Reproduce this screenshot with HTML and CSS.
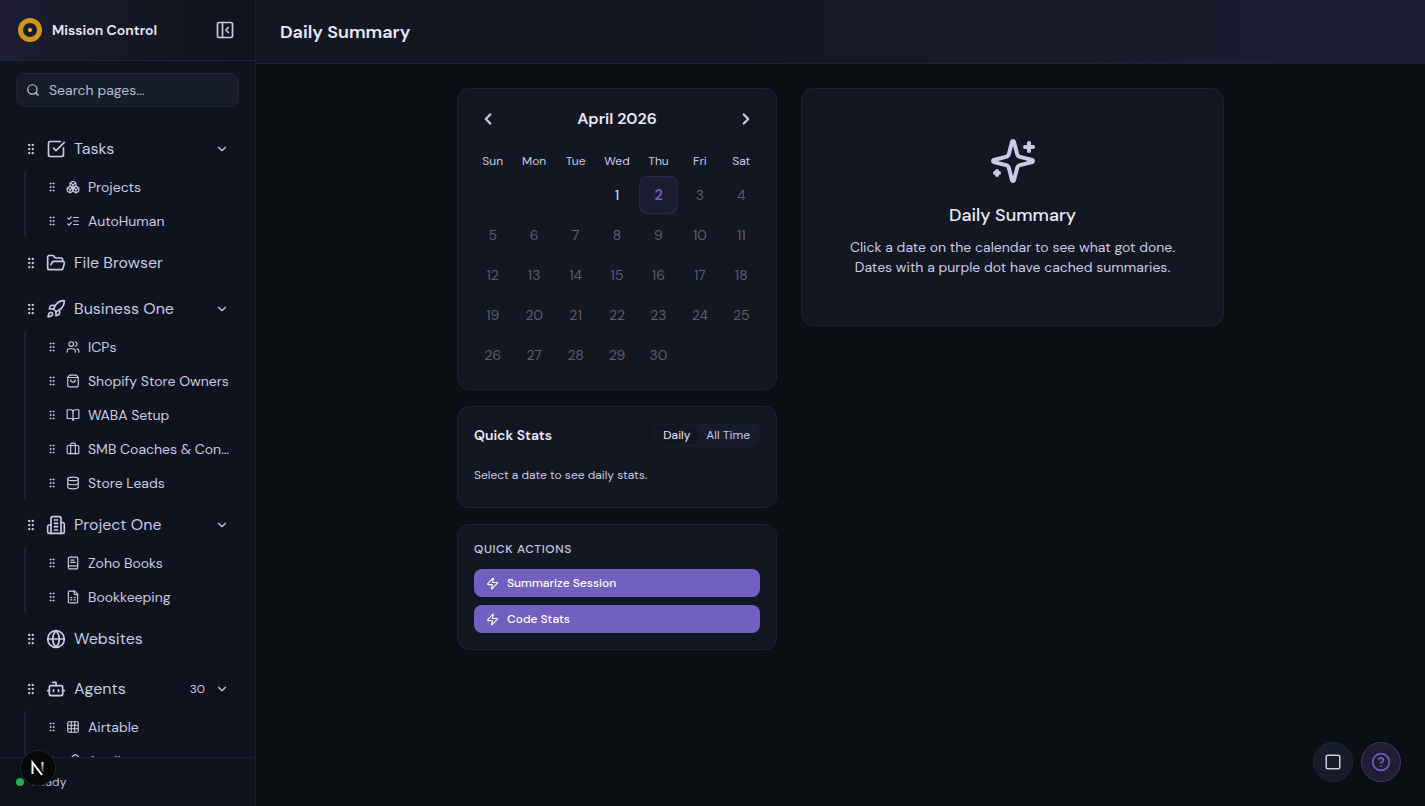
FILE: index.html
```
<!DOCTYPE html>
<html lang="en">
<head>
    <meta charset="UTF-8">
    <meta name="viewport" content="width=device-width, initial-scale=1.0">
    <title>Mission Control</title>
    <link rel="stylesheet" href="styles.css">
</head>
<body>
    <!-- icon sprite -->
    <svg class="sprite" xmlns="http://www.w3.org/2000/svg">
        <symbol id="i-grip" viewBox="0 0 24 24"><circle cx="9" cy="5" r="1"/><circle cx="9" cy="12" r="1"/><circle cx="9" cy="19" r="1"/><circle cx="15" cy="5" r="1"/><circle cx="15" cy="12" r="1"/><circle cx="15" cy="19" r="1"/></symbol>
        <symbol id="i-panel" viewBox="0 0 24 24"><rect width="18" height="18" x="3" y="3" rx="2"/><path d="M9 3v18"/><path d="m16 15-3-3 3-3"/></symbol>
        <symbol id="i-search" viewBox="0 0 24 24"><circle cx="11" cy="11" r="8"/><path d="m21 21-4.3-4.3"/></symbol>
        <symbol id="i-down" viewBox="0 0 24 24"><path d="m6 9 6 6 6-6"/></symbol>
        <symbol id="i-left" viewBox="0 0 24 24"><path d="m15 18-6-6 6-6"/></symbol>
        <symbol id="i-right" viewBox="0 0 24 24"><path d="m9 18 6-6-6-6"/></symbol>
        <symbol id="i-check" viewBox="0 0 24 24"><path d="M21 10.5V19a2 2 0 0 1-2 2H5a2 2 0 0 1-2-2V5a2 2 0 0 1 2-2h12.5"/><path d="m9 11 3 3L22 4"/></symbol>
        <symbol id="i-boxes" viewBox="0 0 24 24"><path d="M2.97 12.92A2 2 0 0 0 2 14.63v3.24a2 2 0 0 0 .97 1.71l3 1.8a2 2 0 0 0 2.06 0L12 19v-5.5l-5-3-4.03 2.42Z"/><path d="m7 16.5-4.74-2.85"/><path d="m7 16.5 5-3"/><path d="M7 16.5v5.17"/><path d="M12 13.5V19l3.97 2.38a2 2 0 0 0 2.06 0l3-1.8a2 2 0 0 0 .97-1.71v-3.24a2 2 0 0 0-.97-1.71L17 10.5l-5 3Z"/><path d="m17 16.5-5-3"/><path d="m17 16.5 4.74-2.85"/><path d="M17 16.5v5.17"/><path d="M7.97 4.42A2 2 0 0 0 7 6.13v4.37l5 3 5-3V6.13a2 2 0 0 0-.97-1.71l-3-1.8a2 2 0 0 0-2.06 0l-3 1.8Z"/><path d="M12 8 7.26 5.15"/><path d="m12 8 4.74-2.85"/><path d="M12 13.5V8"/></symbol>
        <symbol id="i-checklist" viewBox="0 0 24 24"><path d="m3 17 2 2 4-4"/><path d="m3 7 2 2 4-4"/><path d="M13 6h8"/><path d="M13 12h8"/><path d="M13 18h8"/></symbol>
        <symbol id="i-folder" viewBox="0 0 24 24"><path d="m6 14 1.5-2.9A2 2 0 0 1 9.24 10H20a2 2 0 0 1 1.94 2.5l-1.54 6a2 2 0 0 1-1.95 1.5H4a2 2 0 0 1-2-2V5a2 2 0 0 1 2-2h3.9a2 2 0 0 1 1.69.9l.81 1.2a2 2 0 0 0 1.67.9H18a2 2 0 0 1 2 2v2"/></symbol>
        <symbol id="i-rocket" viewBox="0 0 24 24"><path d="M4.5 16.5c-1.5 1.26-2 5-2 5s3.74-.5 5-2c.71-.84.7-2.13-.09-2.91a2.18 2.18 0 0 0-2.91-.09z"/><path d="m12 15-3-3a22 22 0 0 1 2-3.95A12.88 12.88 0 0 1 22 2c0 2.72-.78 7.5-6 11a22.35 22.35 0 0 1-4 2z"/><path d="M9 12H4s.55-3.03 2-4c1.62-1.08 5 0 5 0"/><path d="M12 15v5s3.03-.55 4-2c1.08-1.62 0-5 0-5"/></symbol>
        <symbol id="i-users" viewBox="0 0 24 24"><path d="M16 21v-2a4 4 0 0 0-4-4H6a4 4 0 0 0-4 4v2"/><circle cx="9" cy="7" r="4"/><path d="M22 21v-2a4 4 0 0 0-3-3.87"/><path d="M16 3.13a4 4 0 0 1 0 7.75"/></symbol>
        <symbol id="i-bag" viewBox="0 0 24 24"><path d="M3.1 6.03h17.8"/><path d="M3.4 5.47A2 2 0 0 0 3 6.67V20a2 2 0 0 0 2 2h14a2 2 0 0 0 2-2V6.67a2 2 0 0 0-.4-1.2l-2-2.67A2 2 0 0 0 17 2H7a2 2 0 0 0-1.6.8z"/><path d="M16 10a4 4 0 0 1-8 0"/></symbol>
        <symbol id="i-book" viewBox="0 0 24 24"><path d="M12 7v14"/><path d="M3 18a1 1 0 0 1-1-1V4a1 1 0 0 1 1-1h5a4 4 0 0 1 4 4 4 4 0 0 1 4-4h5a1 1 0 0 1 1 1v13a1 1 0 0 1-1 1h-6a3 3 0 0 0-3 3 3 3 0 0 0-3-3z"/></symbol>
        <symbol id="i-case" viewBox="0 0 24 24"><path d="M16 20V4a2 2 0 0 0-2-2h-4a2 2 0 0 0-2 2v16"/><rect width="20" height="14" x="2" y="6" rx="2"/></symbol>
        <symbol id="i-db" viewBox="0 0 24 24"><ellipse cx="12" cy="5" rx="9" ry="3"/><path d="M3 5v14a9 3 0 0 0 18 0V5"/><path d="M3 12a9 3 0 0 0 18 0"/></symbol>
        <symbol id="i-building" viewBox="0 0 24 24"><path d="M6 22V4a2 2 0 0 1 2-2h8a2 2 0 0 1 2 2v18Z"/><path d="M6 12H4a2 2 0 0 0-2 2v6a2 2 0 0 0 2 2h2"/><path d="M18 9h2a2 2 0 0 1 2 2v9a2 2 0 0 1-2 2h-2"/><path d="M10 6h4"/><path d="M10 10h4"/><path d="M10 14h4"/><path d="M10 18h4"/></symbol>
        <symbol id="i-booktext" viewBox="0 0 24 24"><path d="M4 19.5v-15A2.5 2.5 0 0 1 6.5 2H19a1 1 0 0 1 1 1v18a1 1 0 0 1-1 1H6.5a1 1 0 0 1 0-5H20"/><path d="M8 11h8"/><path d="M8 7h6"/></symbol>
        <symbol id="i-sheet" viewBox="0 0 24 24"><path d="M15 2H6a2 2 0 0 0-2 2v16a2 2 0 0 0 2 2h12a2 2 0 0 0 2-2V7Z"/><path d="M14 2v4a2 2 0 0 0 2 2h4"/><path d="M8 13h2"/><path d="M14 13h2"/><path d="M8 17h2"/><path d="M14 17h2"/></symbol>
        <symbol id="i-globe" viewBox="0 0 24 24"><circle cx="12" cy="12" r="10"/><path d="M12 2a14.5 14.5 0 0 0 0 20 14.5 14.5 0 0 0 0-20"/><path d="M2 12h20"/></symbol>
        <symbol id="i-bot" viewBox="0 0 24 24"><path d="M12 8V4H8"/><rect width="16" height="12" x="4" y="8" rx="2"/><path d="M2 14h2"/><path d="M20 14h2"/><path d="M15 13v2"/><path d="M9 13v2"/></symbol>
        <symbol id="i-grid" viewBox="0 0 24 24"><rect width="18" height="18" x="3" y="3" rx="2"/><path d="M3 9h18"/><path d="M3 15h18"/><path d="M9 3v18"/><path d="M15 3v18"/></symbol>
        <symbol id="i-zap" viewBox="0 0 24 24"><path d="M4 14a1 1 0 0 1-.78-1.63l9.9-10.2a.5.5 0 0 1 .86.46l-1.92 6.02A1 1 0 0 0 13 10h7a1 1 0 0 1 .78 1.63l-9.9 10.2a.5.5 0 0 1-.86-.46l1.92-6.02A1 1 0 0 0 11 14z"/></symbol>
        <symbol id="i-sparkles" viewBox="0 0 24 24"><path d="M9.937 15.5A2 2 0 0 0 8.5 14.063l-6.135-1.582a.5.5 0 0 1 0-.962L8.5 9.936A2 2 0 0 0 9.937 8.5l1.582-6.135a.5.5 0 0 1 .963 0L14.063 8.5A2 2 0 0 0 15.5 9.937l6.135 1.581a.5.5 0 0 1 0 .964L15.5 14.063a2 2 0 0 0-1.437 1.437l-1.582 6.135a.5.5 0 0 1-.963 0z"/><path d="M20 3v4"/><path d="M22 5h-4"/><path d="M4 17v2"/><path d="M5 18H3"/></symbol>
        <symbol id="i-square" viewBox="0 0 24 24"><rect width="18" height="18" x="3" y="3" rx="2"/></symbol>
        <symbol id="i-help" viewBox="0 0 24 24"><circle cx="12" cy="12" r="10"/><path d="M9.09 9a3 3 0 0 1 5.83 1c0 2-3 3-3 3"/><path d="M12 17h.01"/></symbol>
        <symbol id="i-feather" viewBox="0 0 24 24"><path d="M12.67 19a2 2 0 0 0 1.416-.588l6.154-6.172a6 6 0 0 0-8.49-8.49L5.586 9.914A2 2 0 0 0 5 11.328V18a1 1 0 0 0 1 1z"/><path d="M16 8 2 22"/><path d="M17.5 15H9"/></symbol>
    </svg>

    <div class="app">
        <aside class="sidebar">
            <div class="brand">
                <svg class="logo" viewBox="0 0 24 24"><circle cx="12" cy="12" r="9.5" fill="none" stroke="#d0961a" stroke-width="5"/><circle cx="12" cy="12" r="2" fill="#f5c60c"/></svg>
                <span class="brand-name">Mission Control</span>
                <button class="icon-btn" aria-label="Collapse sidebar"><svg class="icon i20"><use href="#i-panel"/></svg></button>
            </div>
            <div class="search">
                <svg class="icon i14"><use href="#i-search"/></svg>
                <input type="text" placeholder="Search pages..." aria-label="Search pages">
            </div>
            <nav class="nav" id="nav"></nav>
            <div class="status"><span class="status-dot"></span>Ready</div>
        </aside>

        <div class="page">
            <header class="topbar"><h1>Daily Summary</h1></header>
            <main class="content">
                <div class="columns">
                    <div class="left">
                        <section class="card">
                            <div class="cal-head">
                                <button class="icon-btn" aria-label="Previous month"><svg class="icon i18"><use href="#i-left"/></svg></button>
                                <h2>April 2026</h2>
                                <button class="icon-btn" aria-label="Next month"><svg class="icon i18"><use href="#i-right"/></svg></button>
                            </div>
                            <div class="cal-grid" id="calendar"></div>
                        </section>

                        <section class="card">
                            <div class="stats-head">
                                <h3>Quick Stats</h3>
                                <div class="toggle">
                                    <button class="active">Daily</button>
                                    <button>All Time</button>
                                </div>
                            </div>
                            <p class="stats-empty">Select a date to see daily stats.</p>
                        </section>

                        <section class="card">
                            <h3 class="actions-title">Quick Actions</h3>
                            <div class="actions">
                                <button><svg class="icon i13"><use href="#i-zap"/></svg>Summarize Session</button>
                                <button><svg class="icon i13"><use href="#i-zap"/></svg>Code Stats</button>
                            </div>
                        </section>
                    </div>

                    <section class="card intro">
                        <svg class="icon i48"><use href="#i-sparkles"/></svg>
                        <h2>Daily Summary</h2>
                        <p>Click a date on the calendar to see what got done.<br>Dates with a purple dot have cached summaries.</p>
                    </section>
                </div>
            </main>
        </div>
    </div>

    <div class="floating">
        <button class="round" aria-label="Stop"><svg class="icon i18"><use href="#i-square"/></svg></button>
        <button class="round help" aria-label="Help"><svg class="icon i20"><use href="#i-help"/></svg></button>
    </div>
    <button class="dev-badge" aria-label="Dev tools">
        <svg viewBox="0 0 36 36" fill="none">
            <defs><linearGradient id="fade" x1="0" y1="12" x2="0" y2="24" gradientUnits="userSpaceOnUse"><stop stop-color="#fff"/><stop offset="1" stop-color="#fff" stop-opacity="0"/></linearGradient></defs>
            <path d="M12.5 24V12.5L22 25" stroke="#fff" stroke-width="2"/>
            <path d="M22.5 12v10" stroke="url(#fade)" stroke-width="2"/>
        </svg>
    </button>

    <script>
        const menu = [
            { name: 'Tasks', icon: 'check', items: [['Projects', 'boxes'], ['AutoHuman', 'checklist']] },
            { name: 'File Browser', icon: 'folder' },
            { name: 'Business One', icon: 'rocket', items: [['ICPs', 'users'], ['Shopify Store Owners', 'bag'], ['WABA Setup', 'book'], ['SMB Coaches & Consultants', 'case'], ['Store Leads', 'db']] },
            { name: 'Project One', icon: 'building', items: [['Zoho Books', 'booktext'], ['Bookkeeping', 'sheet']] },
            { name: 'Websites', icon: 'globe' },
            { name: 'Agents', icon: 'bot', count: 30, items: [['Airtable', 'grid'], ['Apollo', 'feather']] }
        ];

        const icon = (name, size) => `<svg class="icon ${size}"><use href="#i-${name}"/></svg>`;

        // Render sidebar menu
        const renderNav = () => {
            document.getElementById('nav').innerHTML = menu.map(group => `
                <div class="group ${group.count ? 'agents' : ''}">
                    <div class="nav-item">
                        ${icon('grip', 'i14')}
                        <a href="#">${icon(group.icon, 'i20')}<span>${group.name}</span></a>
                        ${group.count ? `<span class="count">${group.count}</span>` : ''}
                        ${group.items ? `<button class="icon-btn" aria-label="Toggle ${group.name}">${icon('down', 'i14')}</button>` : ''}
                    </div>
                    ${group.items ? `<div class="sub">${group.items.map(item => `
                        <div class="sub-item">
                            ${icon('grip', 'i12')}
                            <a href="#">${icon(item[1], 'i14')}<span>${item[0]}</span></a>
                        </div>`).join('')}</div>` : ''}
                </div>`).join('');
        };

        // Render the month, April 1 is a Wednesday
        const renderCalendar = () => {
            const days = ['Sun', 'Mon', 'Tue', 'Wed', 'Thu', 'Fri', 'Sat'];
            let html = days.map(day => `<div class="weekday">${day}</div>`).join('');
            html += '<span></span>'.repeat(3);
            for (let d = 1; d <= 30; d++) {
                const state = d === 2 ? 'today' : d > 2 ? 'future' : '';
                html += `<button class="day ${state}" ${d > 2 ? 'disabled' : ''}>${d}</button>`;
            }
            document.getElementById('calendar').innerHTML = html;
        };

        renderNav();
        renderCalendar();
    </script>
</body>
</html>
```
FILE: styles.css
```
* {
    box-sizing: border-box;
}

body {
    margin: 0;
    font-family: "DM Sans", Inter, "Liberation Sans", sans-serif;
    font-size: 14px;
    line-height: 20px;
    color: #c9cae6;
    background: #0b0e13;
}

h1, h2, h3, p {
    margin: 0;
}

h1, h2, h3 {
    color: #ebe9fc;
    font-weight: 600;
}

button {
    font: inherit;
    color: inherit;
    background: none;
    border: none;
    padding: 0;
    cursor: pointer;
}

a {
    color: inherit;
    text-decoration: none;
}

.sprite {
    display: none;
}

.icon {
    flex: none;
    fill: none;
    stroke: currentColor;
    stroke-width: 2;
    stroke-linecap: round;
    stroke-linejoin: round;
}
.i12 { width: 12px; height: 12px; }
.i13 { width: 13px; height: 13px; }
.i14 { width: 14px; height: 14px; }
.i18 { width: 18px; height: 18px; }
.i20 { width: 20px; height: 20px; }
.i48 { width: 48px; height: 48px; }

.icon-btn {
    display: flex;
    align-items: center;
    justify-content: center;
    width: 28px;
    height: 28px;
}

.app {
    display: flex;
    height: 100vh;
}

/* Sidebar */
.sidebar {
    display: flex;
    flex-direction: column;
    flex: none;
    width: 256px;
    background: #0f131d;
    border-right: 1px solid #1d1e35;
}

.brand {
    display: flex;
    align-items: center;
    flex: none;
    gap: 10px;
    height: 61px;
    padding: 0 16px 0 18px;
    border-bottom: 1px solid #232140;
    background: linear-gradient(90deg, #1e1d33, #131722 60%, #0f131d);
}
.logo {
    width: 24px;
    height: 24px;
}
.brand-name {
    flex: 1;
    color: #ebe9fc;
    font-weight: 600;
}

.search {
    display: flex;
    align-items: center;
    flex: none;
    gap: 9px;
    height: 34px;
    margin: 12px 16px;
    padding: 0 9px;
    background: #161c29;
    border: 1px solid #20203b;
    border-radius: 8px;
}
.search input {
    flex: 1;
    min-width: 0;
    padding: 0;
    border: none;
    outline: none;
    background: none;
    color: inherit;
    font: inherit;
}
.search input::placeholder {
    color: #b9bbd4;
    opacity: 1;
}

.nav {
    display: flex;
    flex-direction: column;
    flex: 1;
    gap: 2px;
    min-height: 0;
    overflow-y: auto;
    scrollbar-width: none;
    padding: 8px 16px 0;
}
.group {
    flex: none;
}
.agents {
    padding-top: 4px;
}
.nav-item {
    display: flex;
    align-items: center;
    height: 44px;
    padding: 0 3px 0 8px;
    font-size: 16px;
}
.nav-item a, .sub-item a {
    display: flex;
    align-items: center;
    flex: 1;
    gap: 8px;
    min-width: 0;
}
.nav-item a {
    margin-left: 8px;
}
.nav-item a span, .sub-item a span {
    overflow: hidden;
    white-space: nowrap;
    text-overflow: ellipsis;
}
.count {
    padding-right: 3px;
    font-size: 12px;
}
.sub {
    display: flex;
    flex-direction: column;
    gap: 2px;
    margin: 0 0 2px 8px;
    padding-left: 20px;
    border-left: 2px solid #20203b;
}
.sub-item {
    display: flex;
    align-items: center;
    gap: 8px;
    height: 32px;
    padding-right: 8px;
}

.status {
    display: flex;
    align-items: center;
    flex: none;
    gap: 8px;
    height: 49px;
    padding: 0 16px;
    border-top: 1px solid #1d1e35;
    font-size: 12px;
}
.status-dot {
    width: 8px;
    height: 8px;
    border-radius: 50%;
    background: #1fbf58;
}

/* Page */
.page {
    display: flex;
    flex-direction: column;
    flex: 1;
    min-width: 0;
}
.topbar {
    display: flex;
    align-items: center;
    flex: none;
    height: 64px;
    padding: 0 24px;
    border-bottom: 1px solid #20203b;
    background: linear-gradient(90deg, #131722 40%, #1d1d32);
}
.topbar h1 {
    font-size: 18px;
}
.content {
    flex: 1;
    overflow: auto;
    padding: 24px;
}
.columns {
    display: grid;
    grid-template-columns: 320px 1fr;
    align-items: start;
    gap: 24px;
    max-width: 767px;
    margin: 0 auto;
}
.left {
    display: flex;
    flex-direction: column;
    gap: 16px;
}
.card {
    padding: 16px;
    background: #131722;
    border: 1px solid #20203b;
    border-radius: 12px;
}

/* Calendar */
.cal-head {
    display: flex;
    align-items: center;
    justify-content: space-between;
    margin-bottom: 16px;
}
.cal-head h2 {
    font-size: 16px;
}
.cal-head .icon {
    stroke-width: 3;
}
.cal-grid {
    display: grid;
    grid-template-columns: repeat(7, 1fr);
    gap: 4px;
}
.weekday {
    padding: 4px 0;
    font-size: 12px;
    line-height: 16px;
    text-align: center;
}
.day {
    height: 36px;
    border: 1px solid transparent;
    border-radius: 8px;
    color: #ebe9fc;
}
.future {
    color: #5b5e6c;
}
.today {
    color: #7260c0;
    font-weight: 600;
    background: #1c1c31;
    border-color: #2a2950;
    transform: scale(1.05);
}

/* Quick stats */
.stats-head {
    display: flex;
    align-items: center;
    justify-content: space-between;
    margin-bottom: 12px;
}
.stats-head h3 {
    font-size: 14px;
}
.toggle {
    display: flex;
    padding: 2px;
    border-radius: 8px;
    background: #161c29;
}
.toggle button {
    padding: 2px 8px;
    border-radius: 6px;
    font-size: 12px;
    line-height: 16px;
}
.toggle .active {
    background: #131722;
    color: #ebe9fc;
}
.stats-empty {
    padding: 8px 0;
    font-size: 12px;
    line-height: 16px;
}

/* Quick actions */
.actions-title {
    margin-bottom: 12px;
    color: #c9cae6;
    font-size: 12px;
    font-weight: 500;
    line-height: 16px;
    letter-spacing: 0.05em;
    text-transform: uppercase;
}
.actions {
    display: flex;
    flex-direction: column;
    gap: 8px;
}
.actions button {
    display: flex;
    align-items: center;
    gap: 8px;
    height: 28px;
    padding: 0 12px;
    border-radius: 8px;
    background: #7260c0;
    color: #fff;
    font-size: 12px;
    font-weight: 500;
}

.intro {
    display: flex;
    flex-direction: column;
    align-items: center;
    padding: 48px 24px;
    text-align: center;
}
.intro h2 {
    margin: 16px 0 8px;
    font-size: 18px;
    font-weight: 500;
    line-height: 28px;
}

/* Floating controls */
.floating {
    position: fixed;
    right: 24px;
    bottom: 24px;
    display: flex;
    gap: 8px;
}
.round {
    display: flex;
    align-items: center;
    justify-content: center;
    width: 40px;
    height: 40px;
    border: 1px solid #20263a;
    border-radius: 50%;
    background: #161c29;
}
.help {
    border-color: #40366e;
    background: #211d35;
    color: #7260c0;
}
.dev-badge {
    position: fixed;
    left: 20px;
    bottom: 20px;
    width: 36px;
    height: 36px;
    border-radius: 50%;
    background: #060708;
    box-shadow: inset 0 0 0 1px #262626, 0 8px 16px rgba(0, 0, 0, 0.2);
}
```
